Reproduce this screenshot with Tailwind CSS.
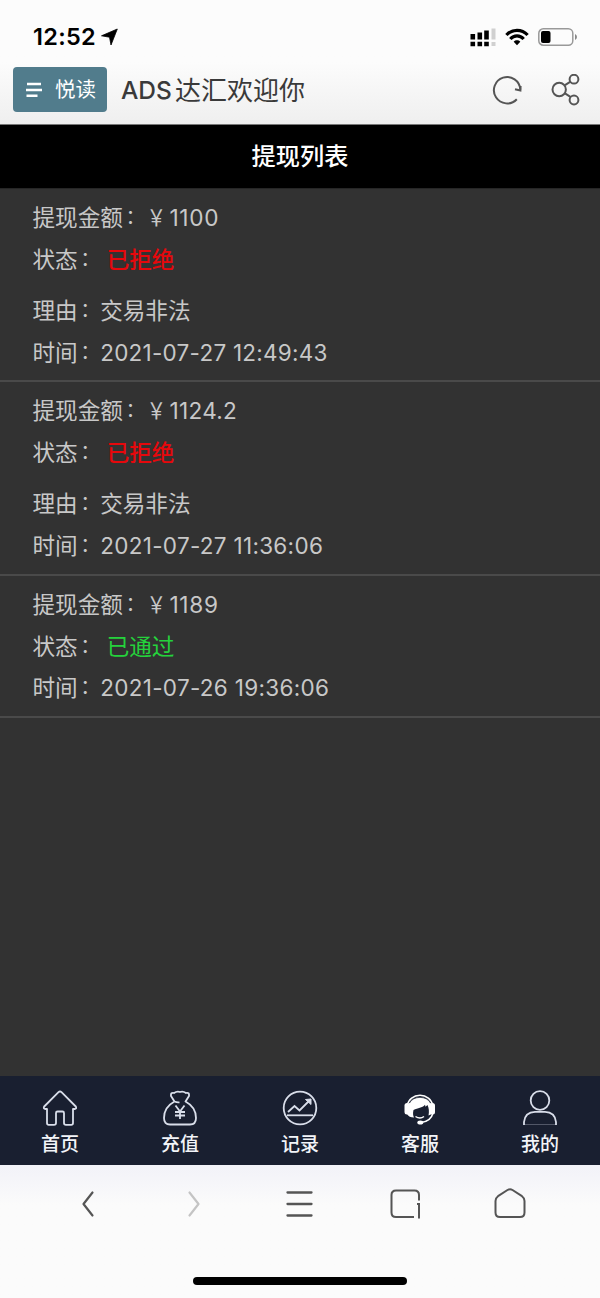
<!DOCTYPE html>
<html lang="zh-CN">
<head>
<meta charset="utf-8">
<title>提现列表</title>
<script src="https://cdn.jsdelivr.net/npm/@tailwindcss/browser@4"></script>
</head>
<body class="w-[600px] h-[1298px] flex flex-col overflow-hidden bg-[#323232] font-['Inter','Noto_Sans_CJK_SC',sans-serif]">
<header class="h-[125px] shrink-0 flex flex-col bg-linear-to-b from-[#fcfcfc] from-50% to-[#efefef] border-b border-[#777]">
  <div class="h-[67px] shrink-0 flex items-center pt-[7px] pl-[33px] pr-[22px]">
    <span class="text-[23.500px] leading-7 font-semibold text-black w-[68px] whitespace-nowrap tracking-[0.300px]">12:52</span>
    <svg width="18" height="18" viewBox="0 0 18 18"><path d="M16.300 1 .5 7.800l8 1.400L10 17z" fill="#000" stroke="#000" stroke-width=".8" stroke-linejoin="round"/></svg>
    <div class="ml-auto flex items-center gap-[9px]">
      <svg width="26" height="20" viewBox="0 0 26 20"><g fill="#000"><path d="M.5 7h4.600v5.500H.5zM7.500 5.500h4.600v7H7.500zM14.200 3.500h4.600v9h-4.600zM.5 14.700h4.600v4.600H.5zM7.500 14.700h4.600v4.600H7.500zM14.200 14.700h4.600v4.600h-4.600z"/></g><path d="M21.500 1.500h4v11h-4zM21.500 15h4v4h-4z" fill="#d0d0d0"/></svg>
      <svg width="24" height="18" viewBox="0 0 24 18" fill="none" stroke="#000" stroke-width="3.200"><path d="M1.400 7C7.200 .7 16.800 .7 22.600 7"/><path d="M5.300 11c3.700-4.100 9.700-4.100 13.400 0"/><path d="m12 17.300-3.300-3.600c1.800-1.800 4.800-1.800 6.600 0z" fill="#000" stroke="none"/></svg>
      <svg width="40" height="18" viewBox="0 0 40 18"><rect x=".8" y=".8" width="34" height="16.400" rx="4.500" fill="none" stroke="#999" stroke-width="1.500"/><rect x="3" y="3" width="9.500" height="12" rx="2" fill="#000"/><path d="M37 6q2 .8 2 3t-2 3z" fill="#888"/></svg>
    </div>
  </div>
  <div class="h-[45px] shrink-0 flex items-center pl-[13px] pr-[20px]">
    <div class="w-[94px] h-[45px] rounded-[4px] bg-[#517c8c] text-white flex items-center pl-[13px] gap-[13px]">
      <svg width="16" height="16" viewBox="0 0 16 16" stroke="#fff" stroke-width="2.400"><path d="M1 2h14M0 8h16M.5 13.800h11"/></svg>
      <span class="text-[20.500px] leading-6 whitespace-nowrap pt-px">悦读</span>
    </div>
    <div class="ml-[14px] flex items-center text-[#3a3a3a] leading-8 whitespace-nowrap"><span class="text-[24.500px] font-medium w-[54px]">ADS</span><span class="text-[26px] leading-8 pt-[2px]">达汇欢迎你</span></div>
    <div class="ml-auto flex items-center gap-[28px]">
      <svg width="32" height="32" viewBox="0 0 32 32" fill="none" stroke="#555" stroke-width="2"><path d="M25.800 25.200A13.200 13.200 0 1 1 29.300 15.500"/><path d="M24 15.200 29.400 16.500 29.600 12" /></svg>
      <svg width="29" height="32" viewBox="0 0 29 32" fill="none" stroke="#555" stroke-width="2"><circle cx="8.200" cy="15.500" r="6.700"/><circle cx="23" cy="5.200" r="4.400"/><circle cx="23" cy="26" r="4.400"/><path d="M14 11.200 19.500 7.700M13.600 19.200l6.200 4"/></svg>
    </div>
  </div>
</header>
<div class="h-[64px] shrink-0 bg-black border-b border-[#262626] flex items-center justify-center text-white text-[24.200px] font-medium leading-8">提现列表</div>
<main class="flex-1 min-h-0 text-[22.600px] leading-[41.500px] text-[#c8c8c8] whitespace-nowrap">
  <section class="h-[193px] pl-[32.500px] pt-[8px] border-b-2 border-[#4a4a4a]">
    <div class="flex"><span>提现金额</span><span class="pl-[2.500px] text-[20px]">：</span><span class="scale-x-85">￥</span><span class="pl-[1.500px] tracking-[0.700px]">1100</span></div>
    <div class="flex"><span>状态</span><span class="pl-[2.500px] w-[29px] text-[20px]">：</span><span class="text-[#e6080c] font-medium">已拒绝</span></div>
    <div class="flex pt-[10px]"><span>理由</span><span class="pl-[2.500px] text-[20px]">：</span><span>交易非法</span></div>
    <div class="flex"><span>时间</span><span class="pl-[2.500px] text-[20px]">：</span><span class="text-[22.500px] tracking-[0.250px]">2021-07-27 12:49:43</span></div>
  </section>
  <section class="h-[194px] pl-[32.500px] pt-[8px] border-b-2 border-[#4a4a4a]">
    <div class="flex"><span>提现金额</span><span class="pl-[2.500px] text-[20px]">：</span><span class="scale-x-85">￥</span><span class="pl-[1.500px] tracking-[0.300px]">1124.2</span></div>
    <div class="flex"><span>状态</span><span class="pl-[2.500px] w-[29px] text-[20px]">：</span><span class="text-[#e6080c] font-medium">已拒绝</span></div>
    <div class="flex pt-[10px]"><span>理由</span><span class="pl-[2.500px] text-[20px]">：</span><span>交易非法</span></div>
    <div class="flex"><span>时间</span><span class="pl-[2.500px] text-[20px]">：</span><span class="text-[22.500px] tracking-[0.300px]">2021-07-27 11:36:06</span></div>
  </section>
  <section class="h-[142px] pl-[32.500px] pt-[8px] border-b-2 border-[#4a4a4a]">
    <div class="flex"><span>提现金额</span><span class="pl-[2.500px] text-[20px]">：</span><span class="scale-x-85">￥</span><span class="pl-[1.500px] tracking-[0.700px]">1189</span></div>
    <div class="flex"><span>状态</span><span class="pl-[2.500px] w-[29px] text-[20px]">：</span><span class="text-[#25d23c]">已通过</span></div>
    <div class="flex"><span>时间</span><span class="pl-[2.500px] text-[20px]">：</span><span class="text-[22.500px] tracking-[0.300px]">2021-07-26 19:36:06</span></div>
  </section>
</main>
<nav class="h-[89px] shrink-0 bg-[#191f30] grid grid-cols-5 text-[#f2f4f8] text-[19px] font-medium leading-6">
  <div class="flex flex-col items-center pt-[14px] gap-[7px]">
    <svg width="36" height="36" viewBox="0 0 36 36" fill="none" stroke="#d9deea" stroke-width="1.800" stroke-linejoin="round"><path d="M16.500 2.200q1.500-1.400 3 0L33.800 16.500q1.200 2.300-1.300 2.500H31v14q0 1.800-1.800 1.800H24q-2 0-2-1.800V23q0-1.500-1.500-1.500h-5Q14 21.500 14 23v10q0 1.800-2 1.800H6.800Q5 34.800 5 33V19H3.500Q1 19 2.200 16.500z"/></svg>
    <span>首页</span></div>
  <div class="flex flex-col items-center pt-[14px] gap-[7px]">
    <svg width="36" height="36" viewBox="0 0 36 36" fill="none" stroke="#d9deea" stroke-width="1.800" stroke-linejoin="round"><path d="M12.500 11.500 9 6Q8.500 2 12 3q3-2.200 6-1 3-1.200 6 1 3.500-1 3 3l-3.500 5.500C30 15 34 21 34 28q0 6.500-6 6.500H8Q2 34.500 2 28c0-7 4-13 10.500-16.500zM12.500 11.500q2.500 1.200 5 .8"/><path d="m13.500 15.500 4.500 6 4.500-6M18 21.500V29M13 22h10M13 25.500h10"/></svg>
    <span>充值</span></div>
  <div class="flex flex-col items-center pt-[14px] gap-[7px]">
    <svg width="36" height="36" viewBox="0 0 36 36" fill="none" stroke="#d9deea" stroke-width="1.800"><circle cx="18" cy="18" r="16.300"/><path d="m6 22 6.500-6 5 4.500L28 10"/><path d="M23.500 9.500 29 9v5.500z" fill="#d9deea" stroke-width="1"/><path d="M5 25.300h26"/></svg>
    <span>记录</span></div>
  <div class="flex flex-col items-center pt-[14px] gap-[7px]">
    <svg width="36" height="36" viewBox="0 0 36 36"><path d="M5.500 15a12.600 11.200 0 0 1 25 0" fill="none" stroke="#fff" stroke-width="1.600"/><path d="M6 17C7.500 3.500 28.500 3.500 30 17v7l-3.500 1.500c.8-4 .5-7-1-10.500l-2 1.800-.5-2c-3 3.500-7 3-11.500 5.200-.8 3-.5 5.500.5 7.500Q7 27.500 5 24z" fill="#fff"/><rect x="2.500" y="13" width="5" height="11.500" rx="2.500" fill="#fff"/><rect x="28" y="13" width="5" height="11.500" rx="2.500" fill="#fff"/><path d="M31 23c-1.500 6-5.500 8.800-12 9.500M13.500 26.500q4.500 3 8.500 0" fill="none" stroke="#fff" stroke-width="1.500"/><path d="M7.500 13C11 5.500 25 5.500 28.500 13" fill="none" stroke="#191f30" stroke-width=".8"/><ellipse cx="18.300" cy="32.500" rx="3" ry="2" fill="#fff"/></svg>
    <span>客服</span></div>
  <div class="flex flex-col items-center pt-[14px] gap-[7px]">
    <svg width="36" height="36" viewBox="0 0 36 36" fill="none" stroke="#d9deea" stroke-width="1.800"><circle cx="18" cy="10.500" r="9.300"/><path d="M2 35v-3Q3 22 13 21.800h10Q33 22 34 32v3"/><path d="M2 34.500h32" stroke-width=".6" opacity=".5"/></svg>
    <span>我的</span></div>
</nav>
<footer class="h-[133px] shrink-0 flex flex-col items-center bg-linear-to-b from-[#f2f2f8] to-[#fbfbfb] to-30%">
  <div class="w-full pt-[22px] pl-[72px] pr-[74px] flex justify-between">
    <svg width="32" height="34" viewBox="0 0 32 34" fill="none" stroke="#555" stroke-width="2.200" stroke-linecap="round" stroke-linejoin="round"><path d="M20.500 5.500 11.500 17l9 11.500"/></svg>
    <svg width="32" height="34" viewBox="0 0 32 34" fill="none" stroke="#c4c4c4" stroke-width="2.200" stroke-linecap="round" stroke-linejoin="round"><path d="m11.500 5.500 9 11.500-9 11.500"/></svg>
    <svg width="32" height="34" viewBox="0 0 32 34" fill="none" stroke="#555" stroke-width="2.300" stroke-linecap="round"><path d="M4.500 5.500h24M4.500 17h24M4.500 28.500h24"/></svg>
    <svg width="32" height="34" viewBox="0 0 32 34" fill="none" stroke="#555" stroke-width="2"><path d="M30 13.500V8q0-4.500-4.500-4.500H7Q2.500 3.500 2.500 8v17.500Q2.500 30 7 30h18M28 17h2v14.500"/></svg>
    <svg width="32" height="34" viewBox="0 0 32 34" fill="none" stroke="#555" stroke-width="2" stroke-linejoin="round"><path d="M13.500 3q2.500-1.500 5 0l9.500 6.200q2.500 1.800 2.500 4.800v11.500Q30.500 30 26 30H6Q1.500 30 1.500 25.500V14q0-3 2.500-4.800z"/></svg>
  </div>
  <div class="mt-[56px] w-[214px] h-[8px] rounded-full bg-black"></div>
</footer>
</body>
</html>
